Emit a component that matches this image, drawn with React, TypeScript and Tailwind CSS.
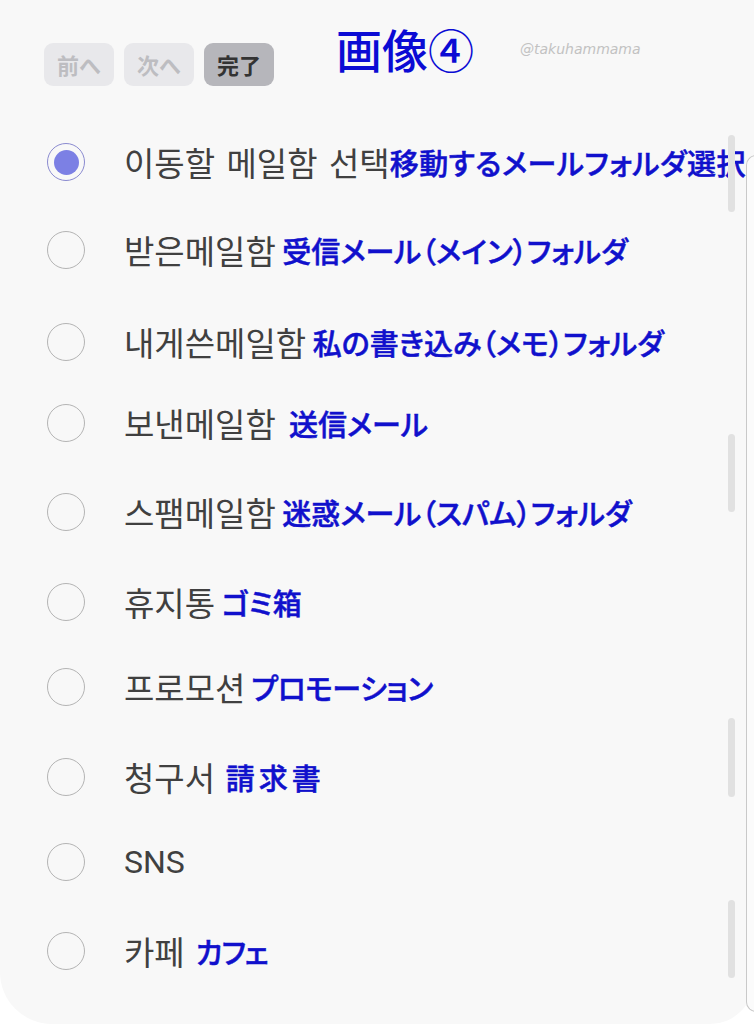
import React from "react";

const KR = '"Noto Sans CJK KR", "Noto Sans CJK JP", sans-serif';
const JP = '"Noto Sans CJK JP", "Noto Sans CJK KR", sans-serif';

type Row = {
  ko: string;
  ja?: string;
  sep?: string;
  mt: string;
  selected?: boolean;
  koExtra?: string;
  jaExtra?: string;
};

const rows: Row[] = [
  { ko: "이동할 메일함 선택", ja: "移動するメールフォルダ選択", sep: "", mt: "mt-[24px]", selected: true, koExtra: "[word-spacing:4px]", jaExtra: "text-[28px] tracking-[0.5px]" },
  { ko: "받은메일함", ja: "受信メール（メイン）フォルダ", sep: " ", mt: "mt-[48px]" },
  { ko: "내게쓴메일함", ja: "私の書き込み（メモ）フォルダ", sep: " ", mt: "mt-[52px]" },
  { ko: "보낸메일함", ja: "送信メール", sep: "  ", mt: "mt-[41px]" },
  { ko: "스팸메일함", ja: "迷惑メール（スパム）フォルダ", sep: " ", mt: "mt-[49px]" },
  { ko: "휴지통", ja: "ゴミ箱", sep: " ", mt: "mt-[50px]" },
  { ko: "프로모션", ja: "プロモーション", sep: " ", mt: "mt-[45px]", jaExtra: "tracking-[-0.5px]" },
  { ko: "청구서", ja: "請求書", sep: " ", mt: "mt-[50px]", jaExtra: "tracking-[4px]" },
  { ko: "SNS", mt: "mt-[45px]" },
  { ko: "카페", ja: "カフェ", sep: "  ", mt: "mt-[49px]", jaExtra: "tracking-[-1px]" },
];

function Radio({ selected }: { selected?: boolean }) {
  if (selected) {
    return (
      <div className="w-[38px] h-[38px] rounded-full border-[1.5px] border-[#8a8ad0] flex items-center justify-center shrink-0">
        <div className="w-[25px] h-[25px] rounded-full bg-[#7c80e4]" />
      </div>
    );
  }
  return <div className="w-[38px] h-[38px] rounded-full border-[1.5px] border-[#b4b4b4] shrink-0" />;
}

export default function App() {
  return (
    <div className="w-[754px] h-[1024px] bg-white relative overflow-hidden">
      <div className="w-[754px] h-[1024px] bg-[#f8f8f8] rounded-bl-[52px] rounded-br-[44px] flex flex-col">
        {/* header */}
        <div className="h-[118px] flex items-start">
          <div className="flex gap-[10px] ml-[44px] mt-[43px]" style={{ fontFamily: JP }}>
            <div className="w-[70px] h-[43px] rounded-[9px] bg-[#e8e8eb] text-[#bdbdc1] text-[22px] font-bold flex items-center justify-center">
              前へ
            </div>
            <div className="w-[70px] h-[43px] rounded-[9px] bg-[#e8e8eb] text-[#bdbdc1] text-[22px] font-bold flex items-center justify-center">
              次へ
            </div>
            <div className="w-[70px] h-[43px] rounded-[9px] bg-[#b6b6bb] text-[#333333] text-[22px] font-bold flex items-center justify-center">
              完了
            </div>
          </div>
          <div
            className="ml-[62px] mt-[18px] text-[46px] leading-[60px] text-[#0b0bd4] font-medium"
            style={{ fontFamily: JP }}
          >
            画像④
          </div>
          <div
            className="ml-[46px] mt-[39px] text-[14px] italic text-[#c2c2c2]"
            style={{ fontFamily: '"DejaVu Sans", sans-serif' }}
          >
            @takuhammama
          </div>
        </div>

        {/* list */}
        <div className="flex flex-col">
          {rows.map((r, i) => (
            <div key={i} className={`${r.mt} h-[40px] flex items-center`}>
              <div className="ml-[47px]">
                <Radio selected={r.selected} />
              </div>
              <div className="ml-[39px] flex items-center whitespace-pre">
                <span
                  className={`${r.ko === "SNS" ? "text-[32px]" : "text-[33px]"} leading-[40px] text-[#404040] ${r.koExtra ?? ""}`}
                  style={{ fontFamily: r.ko === "SNS" ? '"Roboto", sans-serif' : KR }}
                >
                  {r.ko}
                </span>
                {r.ja && (
                  <span
                    className={`text-[29px] leading-[40px] text-[#1010cc] font-medium [font-feature-settings:'palt'] [-webkit-text-stroke:0.5px_#1010cc] ${r.jaExtra ?? ""}`}
                    style={{ fontFamily: JP }}
                  >
                    {r.sep}
                    {r.ja}
                  </span>
                )}
              </div>
            </div>
          ))}
        </div>
      </div>

      {/* scrollbar thumbs */}
      <div className="absolute left-[728px] top-[135px] w-[7px] h-[77px] rounded-full bg-[#e1e1e1]" />
      <div className="absolute left-[728px] top-[434px] w-[7px] h-[78px] rounded-full bg-[#e1e1e1]" />
      <div className="absolute left-[728px] top-[718px] w-[7px] h-[79px] rounded-full bg-[#e1e1e1]" />
      <div className="absolute left-[728px] top-[900px] w-[7px] h-[78px] rounded-full bg-[#e1e1e1]" />

      {/* edge of panel behind */}
      <div className="absolute left-[746px] top-[155px] w-[20px] h-[857px] border-l border-t border-b border-[#c9c9c9] rounded-l-[10px] bg-[#fbfbfb]" />
    </div>
  );
}
